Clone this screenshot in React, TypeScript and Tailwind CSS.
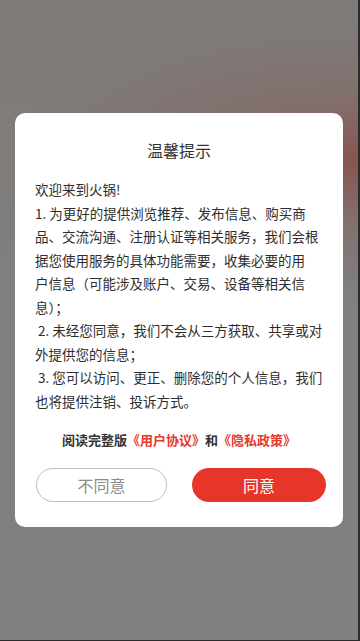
import React from "react";

const lines: string[] = [
  "欢迎来到火锅!",
  "1. 为更好的提供浏览推荐、发布信息、购买商",
  "品、交流沟通、注册认证等相关服务，我们会根",
  "据您使用服务的具体功能需要，收集必要的用",
  "户信息（可能涉及账户、交易、设备等相关信",
  "息）；",
  " 2. 未经您同意，我们不会从三方获取、共享或对",
  "外提供您的信息；",
  " 3. 您可以访问、更正、删除您的个人信息，我们",
  "也将提供注销、投诉方式。",
];

export default function App() {
  return (
    <div
      className="relative w-[360px] h-[641px] flex items-center justify-center overflow-hidden border-r-2 border-b border-[#2b2b2b] bg-[image:radial-gradient(ellipse_340px_140px_at_350px_160px,rgba(136,82,78,0.95)_0%,rgba(132,100,97,0.5)_45%,rgba(128,120,118,0)_100%),linear-gradient(to_bottom,#7e7b79_0%,#7f7c7a_25%,#808080_45%,#808080_100%)]"
      style={{ fontFamily: '"Noto Sans CJK SC", "Noto Sans", sans-serif' }}
    >
      <div className="w-[328px] bg-white rounded-[10px] flex flex-col pt-[25px] pb-[25px]">
        <div className="text-center text-[16px] leading-[24px] text-[#333]">温馨提示</div>
        <div className="mt-[16px] px-5 text-[13.5px] leading-[23.5px] text-[#2e2e2e]">
          {lines.map((l, i) => (
            <div key={i} className="whitespace-pre">
              {l}
            </div>
          ))}
        </div>
        <div className="mt-[17px] text-center text-[13px] leading-[20px] font-semibold text-[#333] whitespace-nowrap">
          阅读完整版<span className="text-[#e8392e]">《用户协议》</span>和<span className="text-[#e8392e]">《隐私政策》</span>
        </div>
        <div className="mt-[18px] flex pl-[21px] pr-[17px] justify-between">
          <div className="w-[131px] h-[34px] rounded-full border border-[#bdbdbd] flex items-center justify-center text-[16px] text-[#8a8a8a]">
            不同意
          </div>
          <div className="w-[134px] h-[34px] rounded-full bg-[#e8352a] flex items-center justify-center text-[16px] text-white">
            同意
          </div>
        </div>
      </div>
    </div>
  );
}
